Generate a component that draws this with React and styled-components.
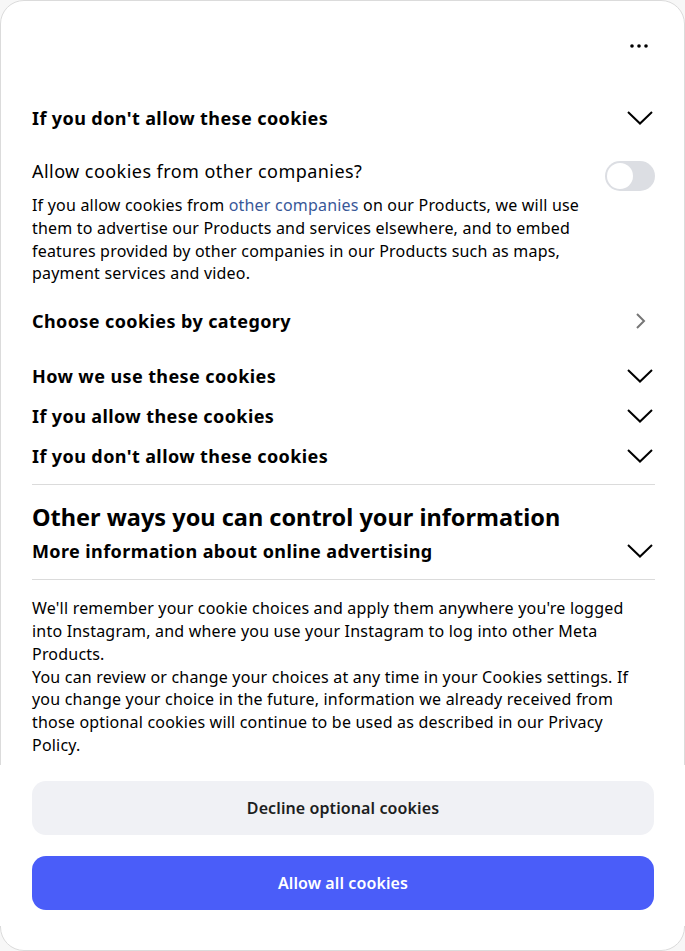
import React from "react";
import styled, { createGlobalStyle } from "styled-components";

const Global = createGlobalStyle`
  * { box-sizing: border-box; }
  body {
    margin: 0;
    background: #f7f7f7;
    font-family: "Noto Sans", "Open Sans", sans-serif;
    color: #000;
  }
`;

const Card = styled.div`
  display: flex;
  flex-direction: column;
  height: 951px;
  background: #fff;
  border: 1px solid #dbdbdb;
  border-radius: 24px;
  padding-bottom: 24px;
`;

const Scroll = styled.div`
  flex: 1;
  min-height: 0;
  overflow: hidden;
  padding: 0 29px 0 31px;
`;

const TopBar = styled.div`
  height: 97px;
  padding-top: 42px;
  display: flex;
  justify-content: flex-end;
  align-items: flex-start;
`;

const MoreButton = styled.button`
  border: 0;
  background: none;
  padding: 0;
  margin-right: 6px;
  display: flex;
  cursor: pointer;
`;

const Row = styled.div`
  display: flex;
  align-items: center;
  justify-content: space-between;
  min-height: 40px;
  margin-top: ${(p) => p.$top || 0}px;
`;

const RowTitle = styled.span`
  font-size: 18px;
  font-weight: 700;
  letter-spacing: 0.4px;
  line-height: 24px;
`;

const ToggleRow = styled.div`
  display: flex;
  justify-content: space-between;
  align-items: flex-start;
  gap: 16px;
  margin-top: 21px;
`;

const ToggleText = styled.div`
  flex: 1;
  min-width: 0;
`;

const ToggleLabel = styled.div`
  font-size: 18px;
  letter-spacing: 0.45px;
  line-height: 24px;
`;

const Switch = styled.button`
  flex: none;
  width: 50px;
  height: 30px;
  border: 0;
  border-radius: 15px;
  background: #dcdee3;
  padding: 2px;
  display: flex;
  cursor: pointer;
  margin-top: 2px;

  &::before {
    content: "";
    width: 26px;
    height: 26px;
    border-radius: 50%;
    background: #fff;
  }
`;

const Text = styled.p`
  margin: ${(p) => p.$top || 0}px 0 0;
  font-size: 16px;
  letter-spacing: 0.2px;
  line-height: 22.8px;
`;

const Link = styled.a`
  color: #385898;
  text-decoration: none;
`;

const Divider = styled.hr`
  margin: 8px 0 0;
  border: 0;
  border-top: 1px solid #dbdbdb;
`;

const SectionTitle = styled.h2`
  margin: 18px 0 0;
  font-size: 23.5px;
  font-weight: 700;
  line-height: 28px;
`;

const Footer = styled.div`
  margin: 0 -1px;
  background: #fff;
  padding: 16px 31px 16px 32px;
  display: flex;
  flex-direction: column;
  gap: 21px;
`;

const Button = styled.button`
  height: 54px;
  border: 0;
  border-radius: 14px;
  font-family: inherit;
  font-size: 16px;
  font-weight: 600;
  letter-spacing: 0.1px;
  background: ${(p) => (p.$primary ? "#4a5df9" : "#f0f1f5")};
  color: ${(p) => (p.$primary ? "#fff" : "#1c1e21")};
  cursor: pointer;
`;

const ChevronDown = () => (
  <svg width="26" height="14" viewBox="0 0 26 14" fill="none" style={{ marginRight: 2 }}>
    <polyline points="1,1 13,12.5 25,1" stroke="#000" strokeWidth="2" />
  </svg>
);

const ChevronRight = () => (
  <svg width="12" height="16" viewBox="0 0 12 16" fill="none" style={{ marginRight: 8 }}>
    <polyline points="2,1 9,8 2,15" stroke="#767676" strokeWidth="2" />
  </svg>
);

const Dots = () => (
  <svg width="20" height="6" viewBox="0 0 20 6">
    <circle cx="3" cy="3" r="1.8" fill="#000" />
    <circle cx="10" cy="3" r="1.8" fill="#000" />
    <circle cx="17" cy="3" r="1.8" fill="#000" />
  </svg>
);

const Accordion = ({ title, top }) => (
  <Row $top={top}>
    <RowTitle>{title}</RowTitle>
    <ChevronDown />
  </Row>
);

export default function App() {
  return (
    <>
      <Global />
      <Card>
        <Scroll>
          <TopBar>
            <MoreButton aria-label="More options">
              <Dots />
            </MoreButton>
          </TopBar>
          <Accordion title="If you don't allow these cookies" />
          <ToggleRow>
            <ToggleText>
              <ToggleLabel>Allow cookies from other companies?</ToggleLabel>
              <Text $top={11}>
                If you allow cookies from <Link href="#">other companies</Link>{" "}
                on our Products, we will use them to advertise our Products and
                services elsewhere, and to embed features provided by other
                companies in our Products such as maps, payment services and
                video.
              </Text>
            </ToggleText>
            <Switch aria-label="Allow cookies from other companies" />
          </ToggleRow>
          <Row $top={16}>
            <RowTitle>Choose cookies by category</RowTitle>
            <ChevronRight />
          </Row>
          <Accordion top={15} title="How we use these cookies" />
          <Accordion title="If you allow these cookies" />
          <Accordion title="If you don't allow these cookies" />
          <Divider />
          <SectionTitle>Other ways you can control your information</SectionTitle>
          <Accordion title="More information about online advertising" />
          <Divider />
          <Text $top={17}>
            We'll remember your cookie choices and apply them anywhere you're
            logged into Instagram, and where you use your Instagram to log into
            other Meta Products.
          </Text>
          <Text>
            You can review or change your choices at any time in your Cookies
            settings. If you change your choice in the future, information we
            already received from those optional cookies will continue to be
            used as described in our Privacy Policy.
          </Text>
        </Scroll>
        <Footer>
          <Button>Decline optional cookies</Button>
          <Button $primary>Allow all cookies</Button>
        </Footer>
      </Card>
    </>
  );
}
